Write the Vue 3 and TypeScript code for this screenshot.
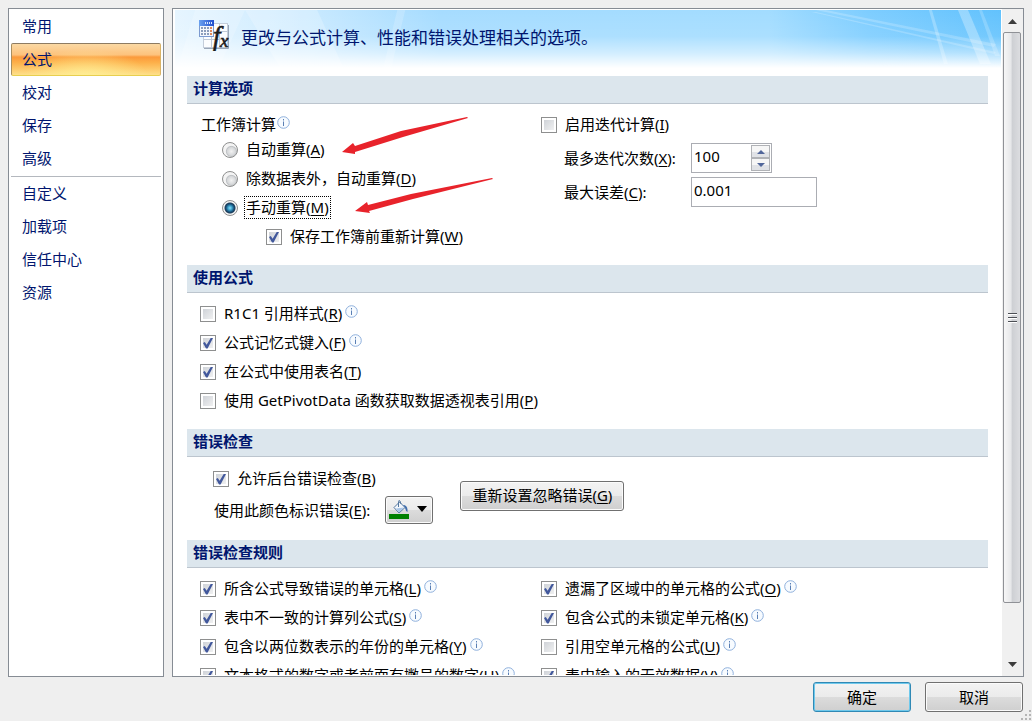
<script setup lang="ts">
import { ref } from 'vue'

interface Option {
  id: string
  text: string
  hotkey: string
  checked: boolean
  info: boolean
}

const mainPages: string[] = ['常用', '公式', '校对', '保存', '高级']
const extraPages: string[] = ['自定义', '加载项', '信任中心', '资源']
const currentPage = ref('公式')

const modes = [
  { value: 'auto', text: '自动重算', hotkey: 'A' },
  { value: 'except-tables', text: '除数据表外，自动重算', hotkey: 'D' },
  { value: 'manual', text: '手动重算', hotkey: 'M' },
]
const mode = ref('manual')
const recalcBeforeSave = ref(true)

const iterate = ref(false)
const maxIterations = ref(100)
const maxChange = ref('0.001')

const formulaOptions = ref<Option[]>([
  { id: 'r1c1', text: 'R1C1 引用样式', hotkey: 'R', checked: false, info: true },
  { id: 'autocomplete', text: '公式记忆式键入', hotkey: 'F', checked: true, info: true },
  { id: 'table-names', text: '在公式中使用表名', hotkey: 'T', checked: true, info: false },
  { id: 'pivot', text: '使用 GetPivotData 函数获取数据透视表引用', hotkey: 'P', checked: false, info: false },
])

const backgroundCheck = ref(true)

const ruleColumns = ref<Option[][]>([
  [
    { id: 'rule-error', text: '所含公式导致错误的单元格', hotkey: 'L', checked: true, info: true },
    { id: 'rule-column', text: '表中不一致的计算列公式', hotkey: 'S', checked: true, info: true },
    { id: 'rule-year', text: '包含以两位数表示的年份的单元格', hotkey: 'Y', checked: true, info: true },
    { id: 'rule-text', text: '文本格式的数字或者前面有撇号的数字', hotkey: 'H', checked: true, info: true },
  ],
  [
    { id: 'rule-omit', text: '遗漏了区域中的单元格的公式', hotkey: 'O', checked: true, info: true },
    { id: 'rule-unlocked', text: '包含公式的未锁定单元格', hotkey: 'K', checked: true, info: true },
    { id: 'rule-empty', text: '引用空单元格的公式', hotkey: 'U', checked: false, info: true },
    { id: 'rule-invalid', text: '表中输入的无效数据', hotkey: 'V', checked: true, info: true },
  ],
])
</script>

<template>
  <div class="dialog">
    <div class="body">
      <nav class="sidebar">
        <button
          v-for="page in mainPages"
          :key="page"
          type="button"
          class="page"
          :class="{ selected: page === currentPage }"
          @click="currentPage = page"
        >{{ page }}</button>
        <hr class="divider">
        <button
          v-for="page in extraPages"
          :key="page"
          type="button"
          class="page"
          :class="{ selected: page === currentPage }"
          @click="currentPage = page"
        >{{ page }}</button>
      </nav>

      <main class="panel">
        <div class="content">
          <header class="banner">
            <svg class="banner-art" viewBox="0 0 825 66" preserveAspectRatio="none" aria-hidden="true">
              <defs>
                <linearGradient id="sky" x1="0" x2="1" y1="0" y2="0">
                  <stop offset="0" stop-color="#e6f5ff" />
                  <stop offset="0.14" stop-color="#cdebff" />
                  <stop offset="0.32" stop-color="#a6dcff" />
                  <stop offset="0.72" stop-color="#a2dcff" />
                  <stop offset="0.84" stop-color="#7dcdff" />
                  <stop offset="1" stop-color="#62c2fd" />
                </linearGradient>
                <linearGradient id="fade" x1="0" x2="0" y1="0" y2="1">
                  <stop offset="0" stop-color="#fff" stop-opacity="0" />
                  <stop offset="0.4" stop-color="#fff" stop-opacity="0.1" />
                  <stop offset="0.65" stop-color="#fff" stop-opacity="0.5" />
                  <stop offset="0.88" stop-color="#fff" stop-opacity="1" />
                </linearGradient>
              </defs>
              <rect width="825" height="66" fill="url(#sky)" />
              <g fill="#fff">
                <path d="M20 0 L70 0 L40 66 L0 66 Z" opacity=".18" />
                <path d="M70 0 L142 0 L172 66 L110 66 Z" opacity=".22" />
                <path d="M222 0 L230 0 L214 66 L206 66 Z" opacity=".18" />
                <path d="M640 0 L650 0 L820 34 L818 37 Z" opacity=".2" />
                <path d="M636 2 L640 2 L820 42 L818 44 Z" opacity=".2" />
                <path d="M753 0 L756 0 L772 54 L768 54 Z" opacity=".25" />
                <path d="M782 0 L792 0 L815 54 L804 54 Z" opacity=".3" />
                <path d="M803 0 L806 0 L824 46 L819 46 Z" opacity=".2" />
              </g>
              <rect width="825" height="66" fill="url(#fade)" />
            </svg>
            <svg class="banner-icon" width="32" height="32" viewBox="0 0 32 32" aria-hidden="true">
              <defs>
                <linearGradient id="calc" x1="0" x2="1" y1="0" y2="0">
                  <stop offset="0" stop-color="#6ba2f0" />
                  <stop offset="1" stop-color="#1f4ccc" />
                </linearGradient>
              </defs>
              <rect x="4.500" y="4.500" width="24" height="24" fill="#fbfdff" stroke="#c4cedb" />
              <path d="M12.500 4V29 M20.500 4V29 M4 12.500H29 M4 20.500H29" stroke="#c0cad8" fill="none" />
              <path d="M5 29.500H29.500V6" stroke="#9aa7b8" fill="none" />
              <rect x=".5" y="1.500" width="14" height="16" fill="#f4f7fc" stroke="#7c9ad0" />
              <rect x="0" y="1" width="15" height="6" fill="url(#calc)" />
              <path d="M6 4H13" stroke="#d7e7ff" stroke-width="2" stroke-dasharray="1 1" />
              <g fill="#8b9dbb">
                <rect x="2" y="8" width="2" height="2" /><rect x="5" y="8" width="2" height="2" /><rect x="8" y="8" width="2" height="2" />
                <rect x="2" y="11" width="2" height="2" /><rect x="5" y="11" width="2" height="2" /><rect x="8" y="11" width="2" height="2" />
                <rect x="2" y="14" width="2" height="2" /><rect x="5" y="14" width="2" height="2" /><rect x="8" y="14" width="2" height="2" />
              </g>
              <g fill="#e08a5c">
                <rect x="11" y="8" width="2" height="2" /><rect x="11" y="11" width="2" height="2" /><rect x="11" y="14" width="2" height="2" />
              </g>
              <text x="14" y="26" class="fx">f</text>
              <text x="21" y="28" class="fx small">x</text>
            </svg>
            <h1>更改与公式计算、性能和错误处理相关的选项。</h1>
          </header>

          <section>
            <h2>计算选项</h2>
            <div class="columns">
              <div class="calc" role="radiogroup" aria-labelledby="calc-title">
                <div class="calc-title">
                  <span id="calc-title">工作簿计算</span>
                  <svg class="info" viewBox="0 0 13 13"><circle cx="6.500" cy="6.500" r="5.800" /><path d="M6.500 3V4.500M6.500 5.500V10" /></svg>
                </div>
                <div v-for="m in modes" :key="m.value" class="row radio-row">
                  <input :id="m.value" v-model="mode" type="radio" name="mode" :value="m.value">
                  <label :for="m.value" :class="{ focused: mode === m.value }">{{ m.text }}(<u>{{ m.hotkey }}</u>)</label>
                </div>
                <div class="row sub-row">
                  <input id="before-save" v-model="recalcBeforeSave" type="checkbox">
                  <label for="before-save">保存工作簿前重新计算(<u>W</u>)</label>
                </div>
                <svg class="arrows" width="152" height="98" viewBox="0 0 152 98" aria-hidden="true">
                  <path d="M126 0 L60 14 L14 29 L12 26 L1 35 L14 37 L14 35 L62 20 L127 1 Z" />
                  <path d="M151 61 L70 77 L27 88 L26 85 L14 94 L29 96 L28 94 L72 82 L152 62 Z" />
                </svg>
              </div>
              <div class="iteration">
                <div class="row">
                  <input id="iterate" v-model="iterate" type="checkbox">
                  <label for="iterate">启用迭代计算(<u>I</u>)</label>
                </div>
                <div class="fields">
                  <label for="max-iterations">最多迭代次数(<u>X</u>):</label>
                  <div class="spinner">
                    <input id="max-iterations" v-model="maxIterations" type="text">
                    <div class="steps">
                      <button type="button" aria-label="增加" @click="maxIterations++"><svg width="8" height="4" viewBox="0 0 8 4"><path d="M0 4L4 0L8 4Z" /></svg></button>
                      <button type="button" aria-label="减少" @click="maxIterations--"><svg width="8" height="4" viewBox="0 0 8 4"><path d="M0 0L4 4L8 0Z" /></svg></button>
                    </div>
                  </div>
                  <label for="max-change">最大误差(<u>C</u>):</label>
                  <input id="max-change" v-model="maxChange" class="text-box" type="text">
                </div>
              </div>
            </div>
          </section>

          <section>
            <h2>使用公式</h2>
            <div class="options">
              <div v-for="o in formulaOptions" :key="o.id" class="row">
                <input :id="o.id" v-model="o.checked" type="checkbox">
                <label :for="o.id">{{ o.text }}(<u>{{ o.hotkey }}</u>)</label>
                <svg v-if="o.info" class="info" viewBox="0 0 13 13"><circle cx="6.500" cy="6.500" r="5.800" /><path d="M6.500 3V4.500M6.500 5.500V10" /></svg>
              </div>
            </div>
          </section>

          <section>
            <h2>错误检查</h2>
            <div class="checking">
              <div>
                <div class="row">
                  <input id="background" v-model="backgroundCheck" type="checkbox">
                  <label for="background">允许后台错误检查(<u>B</u>)</label>
                </div>
                <div class="color-row">
                  <label for="error-color">使用此颜色标识错误(<u>E</u>):</label>
                  <button id="error-color" type="button" class="push color-button">
                    <svg width="40" height="22" viewBox="0 0 40 22" aria-hidden="true">
                      <path d="M5 8.500L10.500 3L16 8.500L10 14Z" fill="#f3f7fc" stroke="#54779f" />
                      <path d="M7 9.500L15 8.500L10 13.500Z" fill="#a9c6e8" />
                      <path d="M9.500 8V2.500Q9.500 1 11 2L12 5" fill="none" stroke="#54779f" />
                      <path d="M14 6Q19 6 18.500 13Q16.500 12 16 8.500Z" fill="#3f6dac" />
                      <rect x="0" y="15" width="20" height="5" fill="#008000" />
                      <path d="M28 7H38L33 13Z" fill="#000" />
                    </svg>
                  </button>
                </div>
              </div>
              <button type="button" class="push reset">重新设置忽略错误(<u>G</u>)</button>
            </div>
          </section>

          <section>
            <h2>错误检查规则</h2>
            <div class="columns">
              <div v-for="(column, i) in ruleColumns" :key="i">
                <div v-for="o in column" :key="o.id" class="row">
                  <input :id="o.id" v-model="o.checked" type="checkbox">
                  <label :for="o.id">{{ o.text }}(<u>{{ o.hotkey }}</u>)</label>
                  <svg v-if="o.info" class="info" viewBox="0 0 13 13"><circle cx="6.500" cy="6.500" r="5.800" /><path d="M6.500 3V4.500M6.500 5.500V10" /></svg>
                </div>
              </div>
            </div>
          </section>
        </div>

        <div class="scrollbar">
          <button type="button" aria-label="向上滚动"><svg width="9" height="5" viewBox="0 0 9 5"><path d="M0 5L4.500 0L9 5Z" /></svg></button>
          <div class="track">
            <div class="thumb"><i></i><i></i><i></i></div>
          </div>
          <button type="button" aria-label="向下滚动"><svg width="9" height="5" viewBox="0 0 9 5"><path d="M0 0L4.500 5L9 0Z" /></svg></button>
        </div>
      </main>
    </div>

    <footer class="footer">
      <button type="button" class="push action primary">确定</button>
      <button type="button" class="push action">取消</button>
    </footer>
    <svg class="grip" width="12" height="12" viewBox="0 0 12 12" aria-hidden="true">
      <path d="M9 1h2v2h-2zM5 5h2v2h-2zM9 5h2v2h-2zM1 9h2v2h-2zM5 9h2v2h-2zM9 9h2v2h-2z" />
    </svg>
  </div>
</template>

<style>
body {
  margin: 0;
  background: #efefef;
}
</style>

<style scoped>
.dialog,
.dialog * {
  box-sizing: border-box;
}

.dialog {
  position: relative;
  display: flex;
  flex-direction: column;
  gap: 5px;
  height: 100vh;
  padding: 8px 8px 9px;
  background: #efefef;
  color: #000;
  font: 15px/21px "Noto Sans", "Noto Sans CJK SC", sans-serif;
}

button,
input {
  margin: 0;
  padding: 0;
  color: inherit;
  font: inherit;
}

u {
  text-underline-offset: 2px;
  text-decoration-thickness: 1px;
}

.body {
  display: flex;
  flex: 1;
  gap: 8px;
  min-height: 0;
}

.sidebar {
  display: flex;
  flex-direction: column;
  flex: 0 0 156px;
  padding: 1px 2px;
  border: 1px solid #868c94;
  background: #fff;
}

.page {
  height: 33px;
  padding: 0 10px;
  border: 1px solid transparent;
  border-radius: 2px;
  background: none;
  color: #00156e;
  text-align: left;
}

.page.selected {
  border-color: #8d7b62 #d9b266 #e8cf4f #a98f60;
  background:
    radial-gradient(ellipse at 50% 110%, rgba(255, 240, 150, 0.9), rgba(255, 240, 150, 0) 60%),
    linear-gradient(#fbd9a4 0%, #fdc27c 35%, #fb9a3c 42%, #fdb04a 60%, #fee08a 100%);
}

.divider {
  width: 100%;
  height: 1px;
  margin: 1px 0 0;
  border: 0;
  background: #b4b8be;
}

.panel {
  display: flex;
  flex: 1;
  min-width: 0;
  border: 1px solid #868c94;
  background: #fff;
}

.content {
  flex: 1;
  min-width: 0;
  margin-bottom: 1px;
  overflow-y: auto;
  scrollbar-width: none;
}

.banner {
  position: relative;
  display: flex;
  gap: 10px;
  height: 66px;
  margin: 1px 1px 0 2px;
  padding: 9px 24px 0;
}

.banner-art {
  position: absolute;
  inset: 0;
  width: 100%;
  height: 100%;
}

.banner-icon {
  position: relative;
  flex: none;
}

.fx {
  font: italic 27px "Liberation Serif", serif;
  fill: #1c1c1c;
  stroke: #1c1c1c;
  stroke-width: 0.6px;
}

.fx.small {
  font-size: 19px;
}

h1 {
  position: relative;
  margin: 0;
  color: #00156e;
  font-size: 17px;
  font-weight: 400;
  line-height: 37px;
}

section {
  padding: 0 14px;
}

h2 {
  height: 28px;
  margin: 0;
  padding: 0 6px;
  border-bottom: 1px solid #bcc5ce;
  background: #dce6ed;
  color: #00156e;
  font-size: 15px;
  font-weight: 700;
  line-height: 25px;
}

.columns {
  display: grid;
  grid-template-columns: 341px 1fr;
  padding: 6px 0 14px 13px;
}

.options {
  padding: 6px 0 14px 13px;
}

.row {
  display: flex;
  align-items: center;
  gap: 8px;
  height: 29px;
  white-space: nowrap;
}

.info {
  flex: none;
  width: 13px;
  height: 13px;
  margin: 0 0 4px -5px;
  fill: #f7fbff;
  stroke: #8fb0dc;
}

.info path {
  stroke: #5a7fb4;
}

.calc {
  position: relative;
}

.calc-title {
  display: flex;
  align-items: center;
  gap: 6px;
  height: 25px;
  padding: 4px 1px 0;
}

.radio-row {
  gap: 6px;
  padding-left: 22px;
}

.radio-row label {
  padding: 0 1px;
  border: 1px dotted transparent;
}

.radio-row label.focused {
  border-color: #000;
}

.sub-row {
  padding-left: 66px;
}

.arrows {
  position: absolute;
  left: 141px;
  top: 7px;
  fill: #e8232b;
  pointer-events: none;
}

input[type="checkbox"],
input[type="radio"] {
  flex: none;
  width: 16px;
  height: 16px;
  border: 1px solid #8e8f8f;
  appearance: none;
}

input[type="checkbox"] {
  display: grid;
  place-items: center;
  background: linear-gradient(135deg, #c9cdd3, #f6f6f6);
  background-clip: content-box;
  background-color: #f4f4f4;
  padding: 2px;
}

input[type="checkbox"]:checked::after {
  width: 10px;
  height: 11px;
  background: #42589c;
  clip-path: polygon(0 50%, 18% 42%, 36% 66%, 80% 0, 100% 4%, 46% 100%, 30% 100%);
  content: "";
}

input[type="radio"] {
  border-radius: 50%;
  background: radial-gradient(circle at 60% 60%, #f2f2f2 0, #d6d8da 4px, #c0c3c6 5px, #f4f4f4 6px);
}

input[type="radio"]:checked {
  background: radial-gradient(circle at 50% 50%, #8fe0f8 0, #3fa5cf 2px, #175078 4px, #1d3c59 5px, #f4f4f4 6px);
}

.iteration .fields {
  display: grid;
  grid-template-columns: 127px 126px;
  row-gap: 4px;
  align-items: center;
  padding: 4px 0 0 23px;
}

.spinner,
.text-box {
  height: 30px;
  border: 1px solid #abadb3;
  background: #fff;
}

.text-box {
  width: 100%;
  padding: 0 2px 5px;
}

.spinner {
  display: flex;
  width: 81px;
  padding: 1px;
}

.spinner input {
  flex: 1;
  min-width: 0;
  padding: 0 1px 4px;
  border: 0;
  background: none;
}

.steps {
  display: flex;
  flex-direction: column;
  width: 19px;
}

.steps button {
  display: grid;
  flex: 1;
  place-items: center;
  border: 1px solid #b0b2b6;
  background: linear-gradient(#f6f6f6 50%, #e0e2e6 50%);
}

.steps path {
  fill: #51669a;
}

.checking {
  display: flex;
  align-items: center;
  gap: 27px;
  padding: 7px 0 13px 26px;
}

.color-row {
  display: flex;
  align-items: center;
  gap: 15px;
  height: 34px;
  padding-left: 1px;
}

.push {
  border: 1px solid #707070;
  border-radius: 3px;
  background: linear-gradient(#f3f3f3 0%, #ebebeb 50%, #dcdcdc 50%, #cfcfcf 100%);
  box-shadow: inset 0 0 0 1px #fbfbfb;
}

.color-button {
  display: grid;
  place-items: center;
  width: 48px;
  height: 28px;
}

.reset {
  height: 30px;
  padding: 0 11px;
}

.scrollbar {
  display: flex;
  flex: 0 0 21px;
  flex-direction: column;
  padding: 1px 2px 1px 1px;
  background: #f0f0f0;
}

.scrollbar button {
  display: grid;
  flex: 0 0 22px;
  place-items: center;
  border: 0;
  background: none;
}

.scrollbar path {
  fill: #3c3c3c;
}

.track {
  flex: 1;
  min-height: 0;
}

.thumb {
  display: flex;
  flex-direction: column;
  align-items: center;
  justify-content: center;
  gap: 2px;
  height: 92%;
  border: 1px solid #8f9196;
  border-radius: 2px;
  background: linear-gradient(90deg, #f6f6f6, #e6e7e9 45%, #cdcfd3 50%, #dcdde0);
}

.thumb i {
  width: 9px;
  height: 2px;
  border-top: 1px solid #4c4f55;
  background: #fff;
}

.footer {
  display: flex;
  justify-content: flex-end;
  gap: 14px;
  padding-right: 1px;
}

.action {
  width: 98px;
  height: 30px;
}

.action.primary {
  border-color: #3089b5;
  box-shadow: inset 0 0 0 1px #6fc9ec;
}

.grip {
  position: absolute;
  right: 0;
  bottom: 0;
  fill: #b5b5b5;
}
</style>
